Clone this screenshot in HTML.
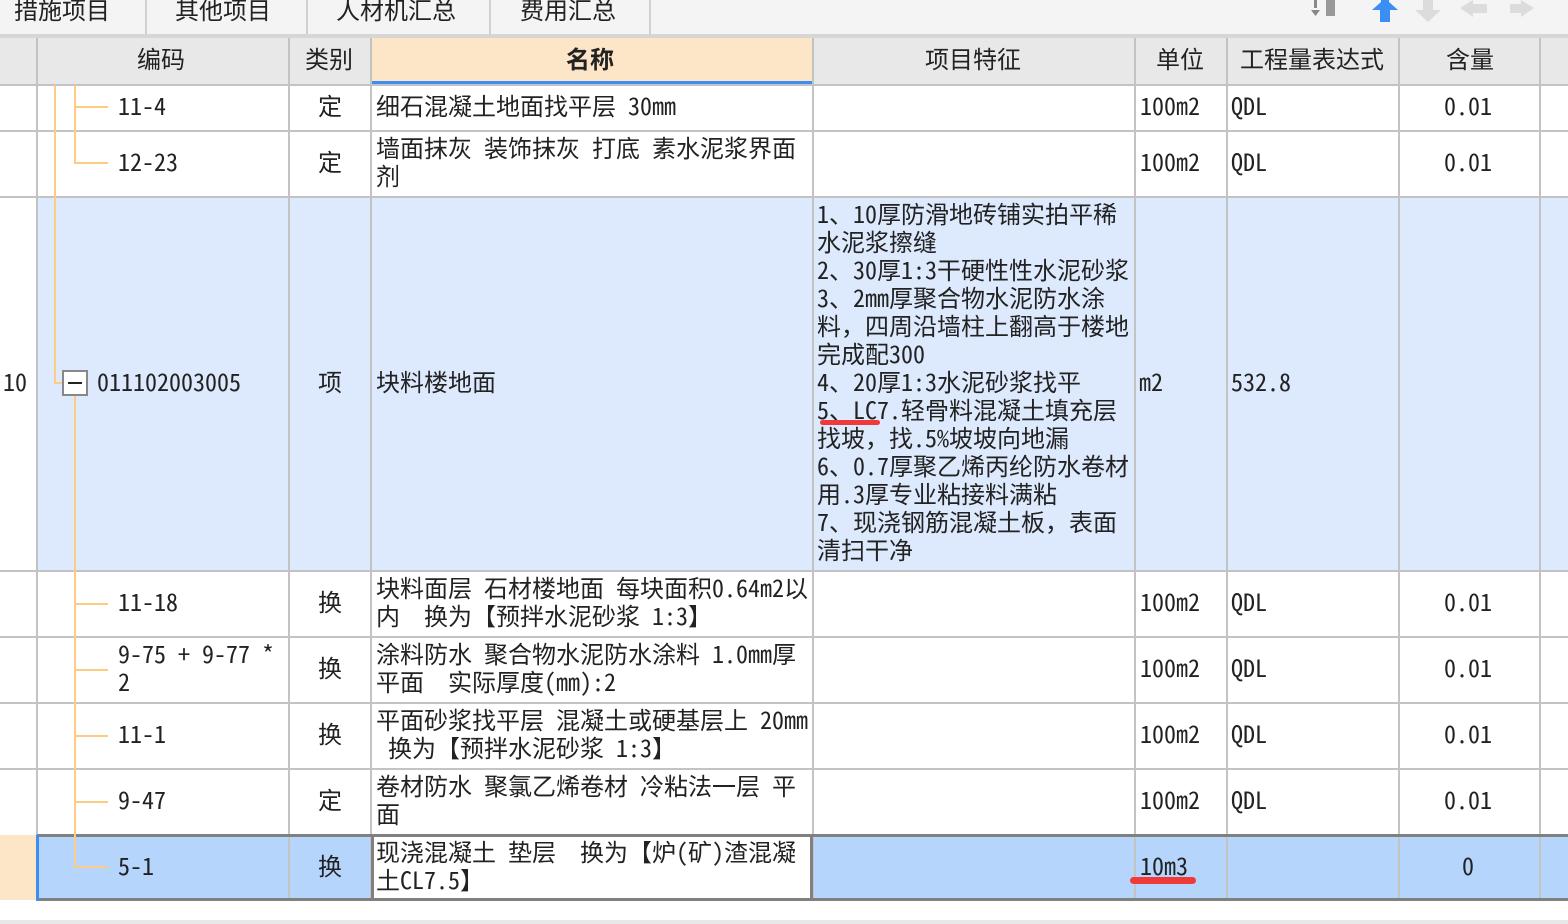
<!DOCTYPE html>
<html><head><meta charset="utf-8"><style>
*{margin:0;padding:0;box-sizing:border-box}
body{width:1568px;height:924px;overflow:hidden;background:#fff;position:relative;font-family:"WenQuanYi Zen Hei Mono","Noto Sans Mono CJK SC","Noto Sans CJK SC",monospace;font-size:24px;color:#222}
.a{position:absolute}
.t{position:absolute;white-space:nowrap;line-height:28px;margin-top:-2px}
.v{position:absolute;width:2px;background:#c3c3c3}
.h{position:absolute;height:2px;background:#c3c3c3;left:0;width:1568px}
.o{position:absolute;background:#fdcb84}
</style></head><body>
<div class="a" style="left:0;top:0;width:1568px;height:36px;background:#f4f4f4"></div>
<div class="a" style="left:0;top:34px;width:1568px;height:4px;background:#d6d6d6"></div>
<div class="a" style="left:145px;top:0;width:2px;height:34px;background:#d0d0d0"></div>
<div class="a" style="left:306px;top:0;width:2px;height:34px;background:#d0d0d0"></div>
<div class="a" style="left:489px;top:0;width:2px;height:34px;background:#d0d0d0"></div>
<div class="a" style="left:649px;top:0;width:2px;height:34px;background:#d0d0d0"></div>
<div class="t" style="left:14px;top:-3px">措施项目</div>
<div class="t" style="left:175px;top:-3px">其他项目</div>
<div class="t" style="left:336px;top:-3px">人材机汇总</div>
<div class="t" style="left:520px;top:-3px">费用汇总</div>
<svg class="a" style="left:1310px;top:0" width="250" height="26">
<rect x="4" y="0" width="3" height="8" fill="#888"/><polygon points="1,10 10,10 5.5,16" fill="#888"/>
<rect x="16" y="0" width="9" height="16" fill="#999"/>
<polygon points="71,0 79,0 79,2 88,10 80,10 80,22 70,22 70,10 62,10 71,2" fill="#3b8ef6"/>
<polygon points="113,0 123,0 123,10 131,10 118,22 105,10 113,10" fill="#dcdcdc"/>
<polygon points="150,8 163,0 163,4 177,4 177,13 163,13 163,17" fill="#dcdcdc"/>
<polygon points="224,8 211,0 211,4 200,4 200,13 211,13 211,17" fill="#dcdcdc"/>
</svg>
<div class="a" style="left:0;top:38px;width:1568px;height:47px;background:#e8e8e8"></div>
<div class="a" style="left:371px;top:38px;width:442px;height:44px;background:#fde6c8"></div>
<div class="a" style="left:371px;top:81px;width:442px;height:3px;background:#3c8ef3"></div>
<div class="t" style="left:137px;top:46px">编码</div>
<div class="t" style="left:305px;top:46px">类别</div>
<div class="t" style="left:566px;top:46px;font-weight:bold">名称</div>
<div class="t" style="left:925px;top:46px">项目特征</div>
<div class="t" style="left:1156px;top:46px">单位</div>
<div class="t" style="left:1240px;top:46px">工程量表达式</div>
<div class="t" style="left:1446px;top:46px">含量</div>
<div class="a" style="left:37px;top:197px;width:1531px;height:374px;background:#dde9fc"></div>
<div class="a" style="left:0;top:835px;width:37px;height:65px;background:#fde6c8"></div>
<div class="a" style="left:37px;top:835px;width:1531px;height:65px;background:#b5d5fc"></div>
<div class="a" style="left:371px;top:835px;width:442px;height:65px;background:#fff"></div>
<div class="h" style="top:84px"></div><div class="h" style="top:130px"></div><div class="h" style="top:196px"></div>
<div class="h" style="top:570px"></div><div class="h" style="top:636px"></div><div class="h" style="top:702px"></div><div class="h" style="top:768px"></div>
<div class="a" style="left:0;top:920px;width:1568px;height:4px;background:#e8e8e8"></div>
<div class="v" style="left:36px;top:38px;height:862px"></div>
<div class="v" style="left:288px;top:38px;height:862px"></div>
<div class="v" style="left:370px;top:38px;height:862px"></div>
<div class="v" style="left:812px;top:38px;height:862px"></div>
<div class="v" style="left:1134px;top:38px;height:862px"></div>
<div class="v" style="left:1226px;top:38px;height:862px"></div>
<div class="v" style="left:1398px;top:38px;height:862px"></div>
<div class="v" style="left:1539px;top:38px;height:862px"></div>
<div class="a" style="left:37px;top:834px;width:1531px;height:3px;background:#808080"></div>
<div class="a" style="left:37px;top:898px;width:1531px;height:3px;background:#808080"></div>
<div class="a" style="left:36px;top:835px;width:3px;height:66px;background:#3c8ef3"></div>
<div class="a" style="left:371px;top:835px;width:3px;height:65px;background:#808080"></div>
<div class="a" style="left:810px;top:835px;width:3px;height:65px;background:#808080"></div>
<div class="o" style="left:54px;top:85px;width:2px;height:299px"></div>
<div class="o" style="left:54px;top:382px;width:9px;height:2px"></div>
<div class="o" style="left:74px;top:85px;width:2px;height:78px"></div>
<div class="o" style="left:74px;top:106px;width:34px;height:2px"></div>
<div class="o" style="left:74px;top:162px;width:34px;height:2px"></div>
<div class="o" style="left:74px;top:395px;width:2px;height:472px"></div>
<div class="o" style="left:74px;top:603px;width:34px;height:2px"></div>
<div class="o" style="left:74px;top:669px;width:34px;height:2px"></div>
<div class="o" style="left:74px;top:735px;width:34px;height:2px"></div>
<div class="o" style="left:74px;top:801px;width:34px;height:2px"></div>
<div class="o" style="left:74px;top:866px;width:34px;height:2px"></div>
<div class="a" style="left:62px;top:370px;width:26px;height:26px;border:2px solid #888;background:#fff"></div>
<div class="a" style="left:68px;top:382px;width:14px;height:2px;background:#222"></div>
<div class="t" style="left:118px;top:93px">11-4</div>
<div class="t" style="left:318px;top:93px">定</div>
<div class="t" style="left:376px;top:93px">细石混凝土地面找平层 30mm</div>
<div class="t" style="left:1140px;top:93px">100m2</div>
<div class="t" style="left:1231px;top:93px">QDL</div>
<div class="t" style="left:1444px;top:93px">0.01</div>
<div class="t" style="left:118px;top:149px">12-23</div>
<div class="t" style="left:318px;top:149px">定</div>
<div class="t" style="left:376px;top:135px">墙面抹灰 装饰抹灰 打底 素水泥浆界面<br>剂</div>
<div class="t" style="left:1140px;top:149px">100m2</div>
<div class="t" style="left:1231px;top:149px">QDL</div>
<div class="t" style="left:1444px;top:149px">0.01</div>
<div class="t" style="left:3px;top:369px">10</div>
<div class="t" style="left:97px;top:369px">011102003005</div>
<div class="t" style="left:318px;top:369px">项</div>
<div class="t" style="left:376px;top:369px">块料楼地面</div>
<div class="t" style="left:817px;top:201px">1、10厚防滑地砖铺实拍平稀<br>水泥浆擦缝<br>2、30厚1:3干硬性性水泥砂浆<br>3、2mm厚聚合物水泥防水涂<br>料，四周沿墙柱上翻高于楼地<br>完成配300<br>4、20厚1:3水泥砂浆找平<br>5、LC7.轻骨料混凝土填充层<br>找坡，找.5%坡坡向地漏<br>6、0.7厚聚乙烯丙纶防水卷材<br>用.3厚专业粘接料满粘<br>7、现浇钢筋混凝土板，表面<br>清扫干净</div>
<div class="a" style="left:820px;top:420px;width:60px;height:5px;border-radius:3px;background:#f03a3a"></div>
<div class="t" style="left:1139px;top:369px">m2</div>
<div class="t" style="left:1231px;top:369px">532.8</div>
<div class="t" style="left:118px;top:589px">11-18</div>
<div class="t" style="left:318px;top:589px">换</div>
<div class="t" style="left:376px;top:575px">块料面层 石材楼地面 每块面积0.64m2以<br>内　换为【预拌水泥砂浆 1:3】</div>
<div class="t" style="left:1140px;top:589px">100m2</div>
<div class="t" style="left:1231px;top:589px">QDL</div>
<div class="t" style="left:1444px;top:589px">0.01</div>
<div class="t" style="left:118px;top:641px">9-75 + 9-77 *<br>2</div>
<div class="t" style="left:318px;top:655px">换</div>
<div class="t" style="left:376px;top:641px">涂料防水 聚合物水泥防水涂料 1.0mm厚<br>平面　实际厚度(mm):2</div>
<div class="t" style="left:1140px;top:655px">100m2</div>
<div class="t" style="left:1231px;top:655px">QDL</div>
<div class="t" style="left:1444px;top:655px">0.01</div>
<div class="t" style="left:118px;top:721px">11-1</div>
<div class="t" style="left:318px;top:721px">换</div>
<div class="t" style="left:376px;top:707px">平面砂浆找平层 混凝土或硬基层上 20mm<br>&nbsp;换为【预拌水泥砂浆 1:3】</div>
<div class="t" style="left:1140px;top:721px">100m2</div>
<div class="t" style="left:1231px;top:721px">QDL</div>
<div class="t" style="left:1444px;top:721px">0.01</div>
<div class="t" style="left:118px;top:787px">9-47</div>
<div class="t" style="left:318px;top:787px">定</div>
<div class="t" style="left:376px;top:773px">卷材防水 聚氯乙烯卷材 冷粘法一层 平<br>面</div>
<div class="t" style="left:1140px;top:787px">100m2</div>
<div class="t" style="left:1231px;top:787px">QDL</div>
<div class="t" style="left:1444px;top:787px">0.01</div>
<div class="t" style="left:118px;top:853px">5-1</div>
<div class="t" style="left:318px;top:853px">换</div>
<div class="t" style="left:376px;top:839px">现浇混凝土 垫层　换为【炉(矿)渣混凝<br>土CL7.5】</div>
<div class="t" style="left:1140px;top:853px">10m3</div>
<div class="a" style="left:1130px;top:877px;width:66px;height:7px;border-radius:4px;background:#f03a3a"></div>
<div class="t" style="left:1462px;top:853px">0</div>
</body></html>
